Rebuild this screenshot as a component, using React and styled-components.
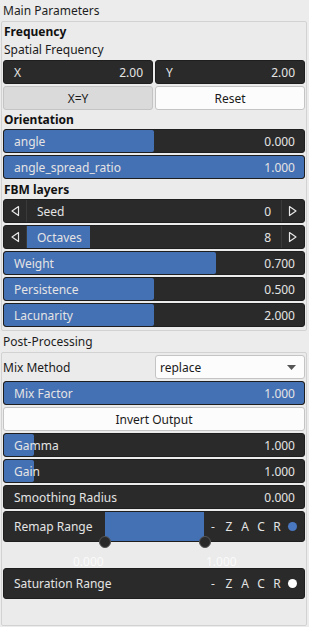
import React from 'react'
import styled, { createGlobalStyle } from 'styled-components';

const Global = createGlobalStyle`
  html, body { margin: 0; padding: 0; background: #ececec; }
  body { font-family: "Noto Sans", "Open Sans", sans-serif; font-size: 12px; color: #1a1a1a; }
  #root { width: 309px; }
`

const DARK = '#2a2a2a';
const BLUE = '#4470b4';

function Arrow({ dir }) {
  const d = dir === 'left' ? 'M8.5 1.5 L2 6 L8.5 10.5 Z' : 'M1.5 1.5 L8 6 L1.5 10.5 Z';
  return (
    <svg width="10" height="12" viewBox="0 0 10 12">
      <path d={d} fill="none" stroke="#e6e6e6" strokeWidth="1.2" strokeLinejoin="round" />
    </svg>
  )
}

function Slider({ label, value, fill }) {
  return (
    <Field>
      <Fill style={{ width: fill + '%' }} />
      <Label>{label}</Label>
      <Value>{value}</Value>
    </Field>
  )
}

function Spin({ label, value, fill }) {
  return (
    <SpinRow>
      <SpinBtn><Arrow dir="left" /></SpinBtn>
      <SpinBody>
        {fill ? <SpinFill style={{ width: fill }} /> : null}
        <Label>{label}</Label>
        <Value>{value}</Value>
      </SpinBody>
      <SpinBtn right><Arrow dir="right" /></SpinBtn>
    </SpinRow>
  )
}

function Modes({ dot }) {
  return (
    <ModeList>
      <span>-</span><span>Z</span><span>A</span><span>C</span><span>R</span>
      <Dot color={dot} />
    </ModeList>
  )
}

export default function App() {
  return (
    <>
      <Global />
      <Title>Main Parameters</Title>
      <Panel>
        <Group>Frequency</Group>
        <Sub>Spatial Frequency</Sub>
        <Stack>
          <Pair>
            <Field><Label>X</Label><Value>2.00</Value></Field>
            <Field><Label>Y</Label><Value>2.00</Value></Field>
          </Pair>
          <Pair>
            <Button pressed>X=Y</Button>
            <Button>Reset</Button>
          </Pair>
        </Stack>
        <Group>Orientation</Group>
        <Stack>
          <Slider label="angle" value="0.000" fill={50} />
          <Slider label="angle_spread_ratio" value="1.000" fill={100} />
        </Stack>
        <Group tall>FBM layers</Group>
        <Stack>
          <Spin label="Seed" value="0" />
          <Spin label="Octaves" value="8" fill={63} />
          <Slider label="Weight" value="0.700" fill={70.5} />
          <Slider label="Persistence" value="0.500" fill={50} />
          <Slider label="Lacunarity" value="2.000" fill={50} />
        </Stack>
      </Panel>
      <Title>Post-Processing</Title>
      <Panel bottom>
        <Stack>
          <Pair>
            <PlainLabel>Mix Method</PlainLabel>
            <Combo>
              <span>replace</span>
              <svg width="9" height="5" viewBox="0 0 9 5"><path d="M0 0 L9 0 L4.5 5 Z" fill="#555" /></svg>
            </Combo>
          </Pair>
          <Slider label="Mix Factor" value="1.000" fill={100} />
          <Button>Invert Output</Button>
          <Slider label="Gamma" value="1.000" fill={10} />
          <Slider label="Gain" value="1.000" fill={10} />
          <Slider label="Smoothing Radius" value="0.000" fill={0} />
          <RangeWrap>
            <RangeRow>
              <RangeFill />
              <Label>Remap Range</Label>
              <Modes dot="#4a78c0" />
            </RangeRow>
            <Handle style={{ left: 96 }} />
            <Handle style={{ left: 196 }} />
            <Tick style={{ left: 70 }}>0.000</Tick>
            <Tick style={{ left: 203 }}>1.000</Tick>
          </RangeWrap>
          <RangeRow>
            <Label>Saturation Range</Label>
            <Modes dot="#ffffff" />
          </RangeRow>
        </Stack>
      </Panel>
    </>
  )
}

const Title = styled.div`
  height: 21px;
  line-height: 21px;
  padding-left: 3px;
  color: #1e1e1e;
`

const Panel = styled.div`
  margin: 0 2px 0 1px;
  border: 1px solid #d2d2d2;
  border-radius: 2px;
  background: #ebebeb;
  padding: ${p => p.bottom ? '2px' : '0'} 1px 3px 1px;
  height: ${p => p.bottom ? '274px' : 'auto'};
  box-sizing: border-box;
`

const Group = styled.div`
  font-weight: 700;
  height: ${p => p.tall ? 20 : 19}px;
  line-height: ${p => p.tall ? 21 : 20}px;
  padding-left: 1px;
  color: #111;
`

const Sub = styled.div`
  height: 19px;
  line-height: 18px;
  padding-left: 1px;
`

const Stack = styled.div`
  display: flex;
  flex-direction: column;
  gap: 2px;
`

const Pair = styled.div`
  display: grid;
  grid-template-columns: 1fr 1fr;
  gap: 2px;
  height: 24px;
`

const Field = styled.div`
  position: relative;
  height: 24px;
  box-sizing: border-box;
  background: ${DARK};
  border: 1px solid #1e1e1e;
  border-radius: 3px;
  display: flex;
  align-items: center;
  justify-content: space-between;
  padding: 0 9px 0 10px;
  color: #e4e4e4;
  overflow: hidden;
`

const Fill = styled.div`
  position: absolute;
  left: 0;
  top: 0;
  bottom: 0;
  background: ${BLUE};
  border-radius: 2px;
`

const Label = styled.span`
  position: relative;
  white-space: nowrap;
`

const Value = styled.span`
  position: relative;
`

const Button = styled.div`
  height: 24px;
  box-sizing: border-box;
  border: 1px solid #c4c4c4;
  border-radius: 3px;
  background: ${p => p.pressed ? '#dadada' : '#fcfcfc'};
  display: flex;
  align-items: center;
  justify-content: center;
  color: #1a1a1a;
`

const SpinRow = styled.div`
  height: 24px;
  box-sizing: border-box;
  background: ${DARK};
  border: 1px solid #1e1e1e;
  border-radius: 3px;
  display: flex;
  color: #e4e4e4;
  overflow: hidden;
`

const SpinBtn = styled.div`
  width: 22px;
  flex: none;
  display: flex;
  align-items: center;
  justify-content: center;
  border-left: ${p => p.right ? '1px solid #3a3a3a' : 'none'};
  border-right: ${p => p.right ? 'none' : '1px solid #3a3a3a'};
`

const SpinBody = styled.div`
  position: relative;
  flex: 1;
  display: flex;
  align-items: center;
  justify-content: space-between;
  padding: 0 10px 0 10px;
`

const SpinFill = styled.div`
  position: absolute;
  left: 0;
  top: 0;
  bottom: 0;
  background: ${BLUE};
`

const PlainLabel = styled.div`
  display: flex;
  align-items: center;
`

const Combo = styled.div`
  box-sizing: border-box;
  border: 1px solid #c4c4c4;
  border-radius: 3px;
  background: #fcfcfc;
  display: flex;
  align-items: center;
  justify-content: space-between;
  padding: 0 8px 0 4px;
`

const RangeWrap = styled.div`
  position: relative;
  height: 55px;
`

const RangeRow = styled.div`
  position: relative;
  height: 31px;
  box-sizing: border-box;
  background: ${DARK};
  border: 1px solid #1e1e1e;
  border-radius: 3px;
  display: flex;
  align-items: center;
  justify-content: space-between;
  padding: 0 7px 0 10px;
  color: #e4e4e4;
  overflow: hidden;
`

const RangeFill = styled.div`
  position: absolute;
  left: 101px;
  width: 99px;
  top: 0;
  bottom: 0;
  background: ${BLUE};
`

const Handle = styled.div`
  position: absolute;
  top: 25px;
  width: 12px;
  height: 12px;
  box-sizing: border-box;
  border-radius: 50%;
  background: #2a2a2a;
  border: 1px solid #555;
`

const Tick = styled.div`
  position: absolute;
  top: 42px;
  color: #fafafa;
`

const ModeList = styled.div`
  position: relative;
  display: flex;
  align-items: center;
  span { display: inline-block; width: 16px; text-align: center; }
`

const Dot = styled.i`
  display: inline-block;
  width: 9px;
  height: 9px;
  border-radius: 50%;
  margin-left: 3px;
  background: ${p => p.color};
`
